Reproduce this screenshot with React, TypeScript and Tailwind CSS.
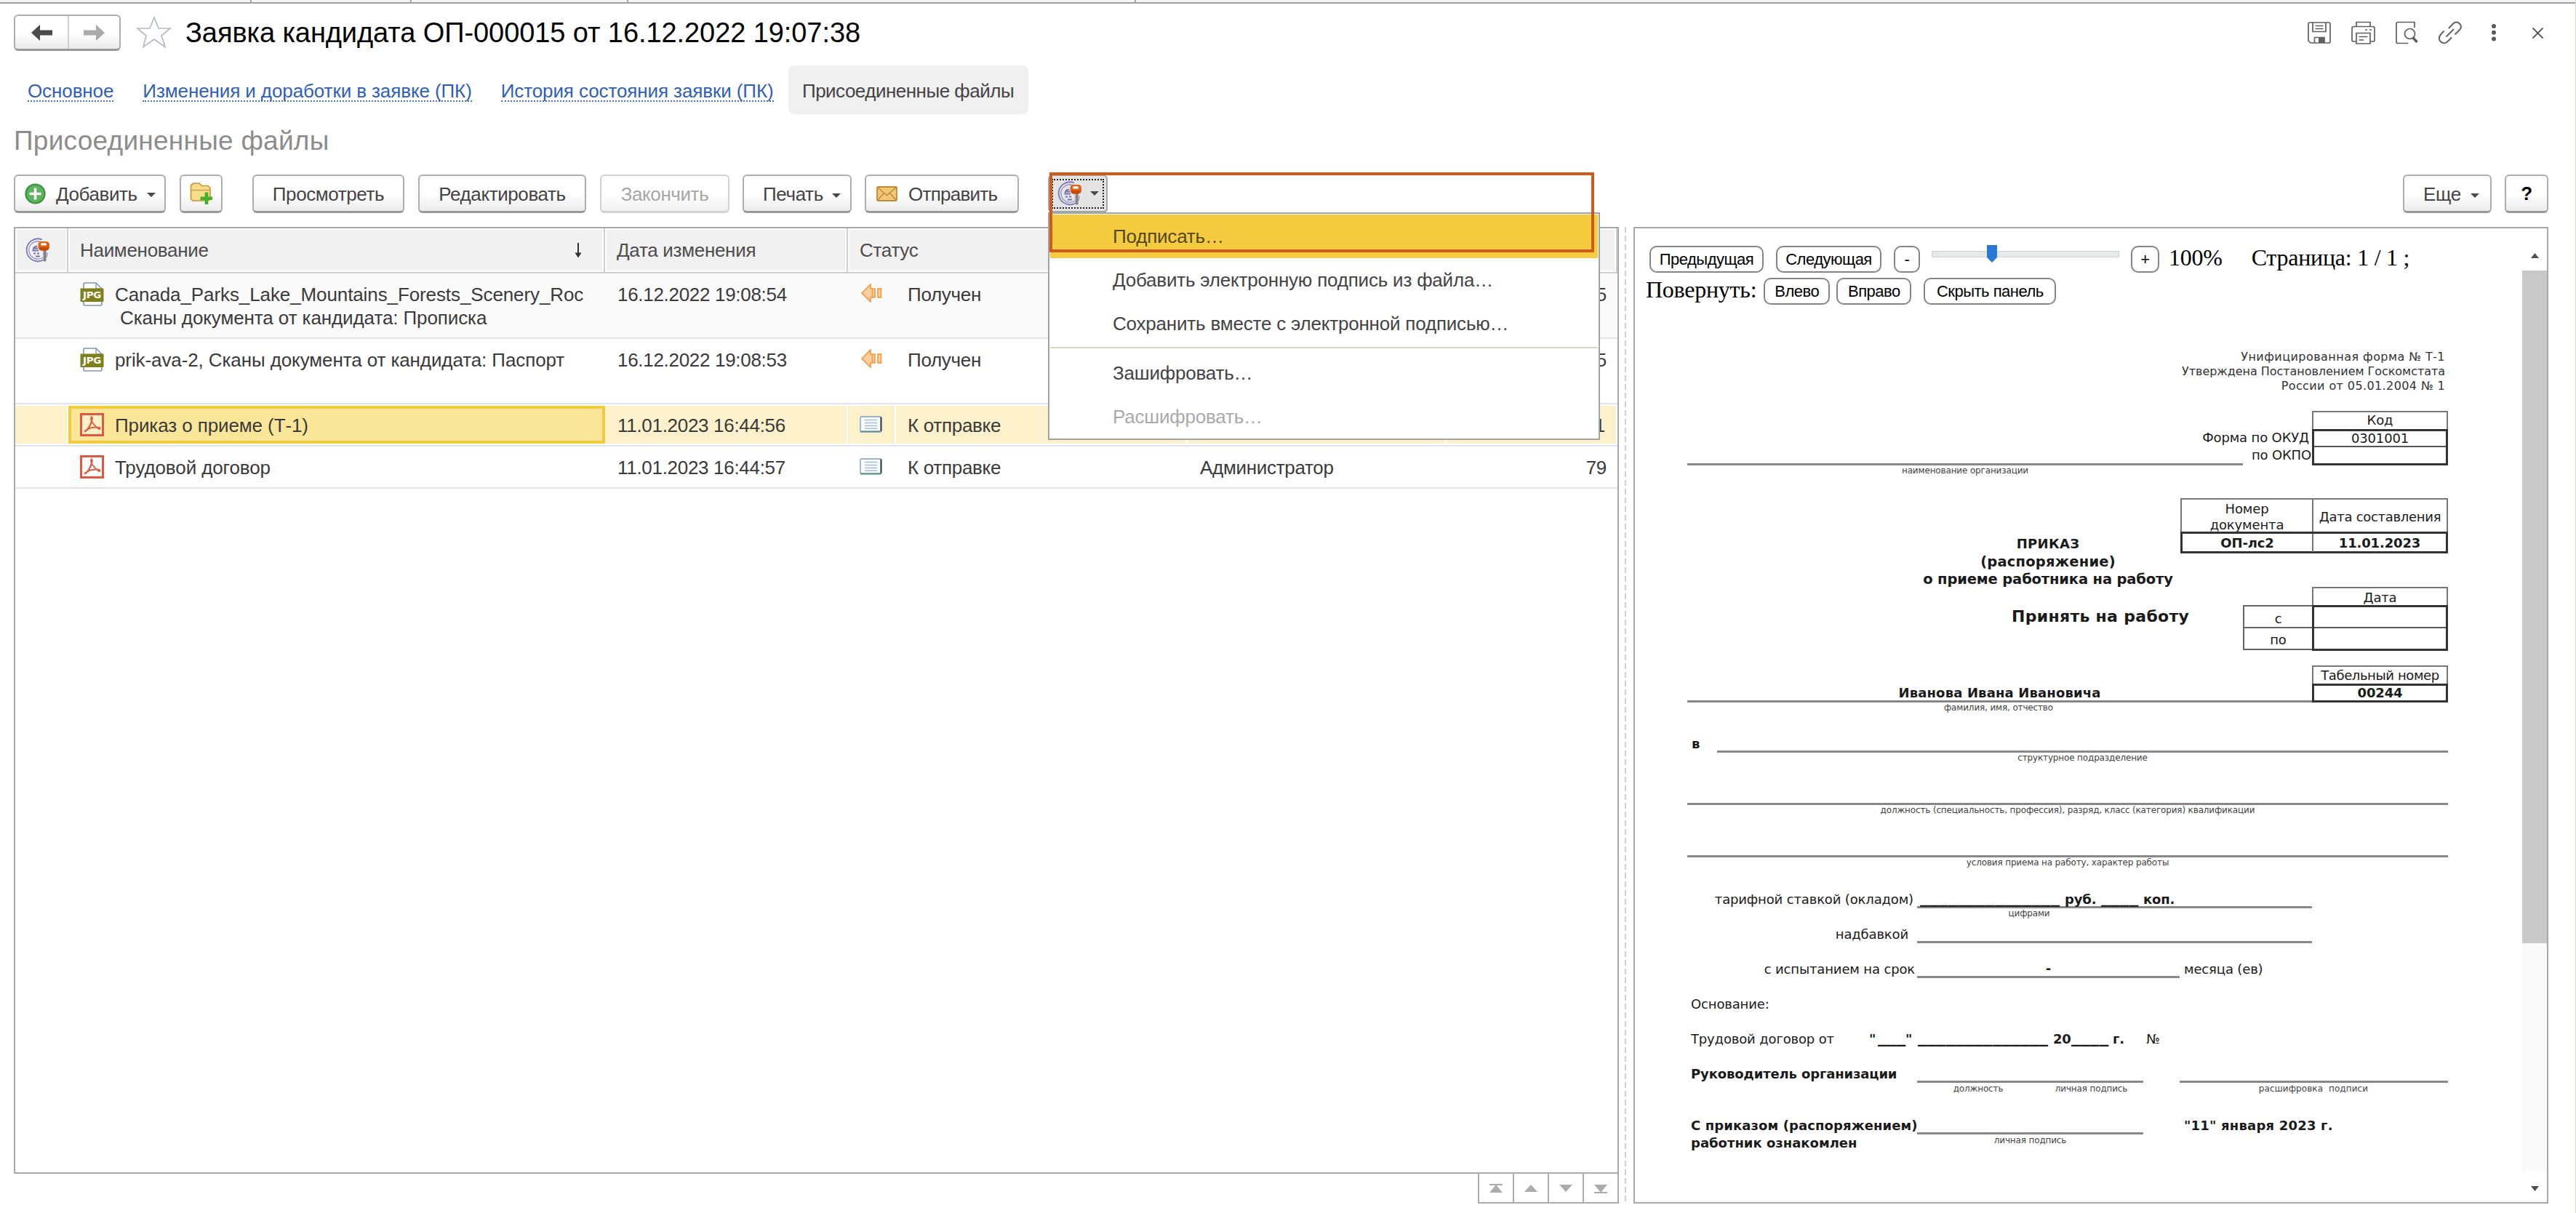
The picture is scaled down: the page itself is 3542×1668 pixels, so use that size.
import type { ReactNode } from "react";

const BTN =
  "flex h-[53px] shrink-0 items-center rounded-[6px] border-2 border-b-[3px] border-[#adadad] border-b-[#999999] bg-linear-to-b from-white from-50% to-[#ebebeb] whitespace-nowrap text-[#444444]";
const PLAIN_BTN =
  "flex h-[37px] shrink-0 items-center justify-center rounded-[10px] border-2 border-[#858585] bg-white font-['Liberation_Sans',sans-serif] text-[22px] leading-none tracking-[-0.5px] whitespace-nowrap text-black";
const COLS = "grid grid-cols-[73px_738px_334px_66px_401px_356px_235px]";
const CAPTION = "h-[14px] text-[12px] leading-[14px] tracking-[-0.15px] whitespace-nowrap text-[#444444]";
const RULE = "border-b-[3px] border-[#888888]";
const BLANK = "text-[25.6px] leading-[10px] tracking-normal";

type FileRow = {
  name: string;
  extra?: string;
  kind: "jpg" | "pdf";
  date: string;
  received: boolean;
  status: string;
  author: string;
  size: string;
  selected?: boolean;
};

const FILES: FileRow[] = [
  {
    name: "Canada_Parks_Lake_Mountains_Forests_Scenery_Roc",
    extra: "Сканы документа от кандидата: Прописка",
    kind: "jpg",
    date: "16.12.2022 19:08:54",
    received: true,
    status: "Получен",
    author: "",
    size: "5",
  },
  {
    name: "prik-ava-2, Сканы документа от кандидата: Паспорт",
    kind: "jpg",
    date: "16.12.2022 19:08:53",
    received: true,
    status: "Получен",
    author: "",
    size: "5",
  },
  {
    name: "Приказ о приеме (Т-1)",
    kind: "pdf",
    date: "11.01.2023 16:44:56",
    received: false,
    status: "К отправке",
    author: "",
    size: "1",
    selected: true,
  },
  {
    name: "Трудовой договор",
    kind: "pdf",
    date: "11.01.2023 16:44:57",
    received: false,
    status: "К отправке",
    author: "Администратор",
    size: "79",
  },
];

function Caret() {
  return (
    <svg className="h-[6px] w-[12px] shrink-0" viewBox="0 0 12 6">
      <path d="M0 0H12L6 6Z" fill="#4a4a4a" />
    </svg>
  );
}

function SignIcon() {
  return (
    <svg className="h-[34px] w-[34px] shrink-0" viewBox="0 0 34 34" fill="none">
      <path d="M23 2.500A15.500 15.500 0 1 0 25 30.200" stroke="#7d7bb8" strokeWidth="1.800" />
      <path d="M21 5.500A12.200 12.200 0 1 0 24 27" stroke="#9694c8" strokeWidth="1.300" />
      <path d="M30 20A15 15 0 0 1 28.500 27" stroke="#9694c8" strokeWidth="1.300" />
      <path d="M16 11.500C12 12 10.500 14 10.500 17.500H18M12 14.500H17M11 21.500H14M16 21.500H19M14 25.500H20" stroke="#7573b4" strokeWidth="1.800" />
      <path d="M24.200 14H28.500V31.500L26.500 33L24.200 30.500Z" fill="#808080" />
      <path d="M24.500 15V30" stroke="#b8b8b8" strokeWidth="1.500" />
      <rect x="17.500" y="5" width="15.500" height="12.500" rx="4.500" fill="#dd6218" />
      <path d="M19 13H32Q31 17 28 17.400H22Q19.500 17 19 13Z" fill="#c34a08" />
      <rect x="21" y="7.200" width="8" height="3.400" rx="1.500" fill="#fff" />
    </svg>
  );
}

function JpgIcon() {
  return (
    <svg className="h-[33px] w-[33px] shrink-0" viewBox="0 0 33 33">
      <path d="M5 9V2.500Q5 1 6.500 1H22L30 9V30Q30 32 28 32H7Q5 32 5 30Z" fill="#fff" stroke="#7d98ae" strokeWidth="1.600" />
      <path d="M22 1V9H30" fill="none" stroke="#7d98ae" strokeWidth="1.300" />
      <rect x="0.500" y="8.500" width="32" height="18.500" rx="1" fill="#80801a" />
      <text x="16.500" y="22.300" textAnchor="middle" fontFamily="'DejaVu Sans'" fontWeight="700" fontSize="12.500" textLength="25" lengthAdjust="spacingAndGlyphs" fill="#fff">
        JPG
      </text>
    </svg>
  );
}

function PdfIcon() {
  return (
    <svg className="h-[32px] w-[33px] shrink-0" viewBox="0 0 33 32" fill="none" stroke="#dd5a40">
      <rect x="1.500" y="1.500" width="30" height="29" fill="#fff" fillOpacity="0.450" strokeWidth="3" />
      <path d="M15 5.500C16.500 5 17 6.500 16.500 9C15.500 15 11 23.500 6.500 25.500" strokeWidth="2.200" />
      <path d="M15 6C14.500 10.500 19 18 27.500 22.500M6 25.500C11 20.500 20 18 28 20.500" strokeWidth="1.800" />
      <path d="M24 20.500L28 21.500" strokeWidth="3" />
    </svg>
  );
}

function ReceivedIcon() {
  return (
    <svg className="mt-px ml-[2px] h-[26px] w-[29px]" viewBox="0 0 29 26" fill="#fbcfa0" stroke="#f39a45" strokeWidth="1.700">
      <path d="M1 13L13 1V7H19V19H13V25Z" />
      <path d="M15.500 7V19" />
      <rect x="23" y="7" width="4.500" height="12" />
    </svg>
  );
}

function ToSendIcon() {
  return (
    <svg className="mt-[3px] h-[23px] w-[31px]" viewBox="0 0 31 23">
      <rect x="1" y="1" width="28.500" height="20.500" rx="1.500" fill="#f7fbfd" stroke="#9db4c8" strokeWidth="1.800" />
      <path d="M29.500 1.500V21" stroke="#3d4a52" strokeWidth="2.200" />
      <path d="M1 21.500H29.500" stroke="#5f8f8f" strokeWidth="2" />
      <path d="M7 5.500H24M7 9.500H24M7 13.500H24M7 17.300H24" stroke="#a9bfd0" strokeWidth="1.500" />
    </svg>
  );
}

function WindowIcons() {
  const cell = "flex w-[60px] items-center justify-center";
  return (
    <div className="flex h-[50px] pr-[22px]">
      <div className={cell}>
        <svg className="h-[30px] w-[32px]" viewBox="0 0 32 30" fill="none" stroke="#606060" strokeWidth="1.700">
          <path d="M3 1H29Q31 1 31 3V27Q31 29 29 29H4L1 26V3Q1 1 3 1Z" />
          <path d="M7 1V13.500H25V1M10.500 5.500H21.500M10.500 9.500H21.500M9.500 29V21.500H23V29" />
          <rect x="15" y="22" width="8" height="7" fill="#606060" stroke="none" />
        </svg>
      </div>
      <div className={cell}>
        <svg className="h-[32px] w-[33px]" viewBox="0 0 33 32" fill="none" stroke="#606060" strokeWidth="1.700">
          <path d="M7 7.500V1.500H26V7.500M7 28H3Q1 28 1 26V10Q1 7.500 3.500 7.500H29.500Q32 7.500 32 10V26Q32 28 30 28H26" />
          <path d="M7 16.500H26V31H7ZM10.500 21.500H22.500M10.500 26H17M19 12H22M25 12H28" />
        </svg>
      </div>
      <div className={cell}>
        <svg className="h-[32px] w-[31px]" viewBox="0 0 31 32" fill="none" stroke="#606060" strokeWidth="1.700">
          <path d="M17 30.500H3Q1 30.500 1 28.500V3.500Q1 1.500 3 1.500H26V9" />
          <circle cx="19.500" cy="17.500" r="7" />
          <path d="M24 23L29.500 29" strokeWidth="3.600" />
        </svg>
      </div>
      <div className={cell}>
        <svg className="h-[32px] w-[32px]" viewBox="0 0 32 32" fill="none" stroke="#606060" strokeWidth="1.900">
          <path d="M14 10L20 3.500Q24.500-.5 29 3.500Q33 8 29 12L22.500 18.500M7.500 13.500L3 18.500Q-1 23 2.500 28Q7.500 32.500 12 28.500L18 22.500M10.500 21.500L21 11" />
        </svg>
      </div>
      <div className={cell}>
        <svg className="h-[24px] w-[8px]" viewBox="0 0 8 24" fill="#5a5a5a">
          <circle cx="4" cy="3" r="3" />
          <circle cx="4" cy="11.700" r="3" />
          <circle cx="4" cy="20.500" r="3" />
        </svg>
      </div>
      <div className={cell}>
        <svg className="h-[15px] w-[15px]" viewBox="0 0 15 15" stroke="#505050" strokeWidth="1.900">
          <path d="M0.500 0.500L14.500 14.500M14.500 0.500L0.500 14.500" />
        </svg>
      </div>
    </div>
  );
}

function Header() {
  return (
    <div className="flex h-[85px] shrink-0 items-start pt-[15px] pl-[19px]">
      <div className="flex h-[50px] w-[147px] rounded-[6px] border-2 border-b-[3px] border-[#adadad] border-b-[#999999] bg-linear-to-b from-white from-50% to-[#ebebeb]">
        <div className="flex w-[74px] items-center justify-center border-r-2 border-[#cfcfcf]">
          <svg className="h-[22px] w-[29px]" viewBox="0 0 29 22">
            <path d="M0 11L12 0V7.500H29V14.500H12V22Z" fill="#4a4a4a" />
          </svg>
        </div>
        <div className="flex flex-1 items-center justify-center">
          <svg className="h-[22px] w-[29px]" viewBox="0 0 29 22">
            <path d="M29 11L17 0V7.500H0V14.500H17V22Z" fill="#aaaaaa" />
          </svg>
        </div>
      </div>
      <svg className="mt-[2px] ml-[21px] h-[45px] w-[50px]" viewBox="0 0 50 45" fill="none" stroke="#b3bbc4" strokeWidth="1.700">
        <path d="M25 2L31 17H47L35 27L40 42.500L25 32L10 42.500L14 27L2 17H19Z" />
      </svg>
      <h1 className="ml-[18px] flex-1 text-[38px] leading-[51px] tracking-[-0.08px] whitespace-nowrap text-black">
        Заявка кандидата ОП-000015 от 16.12.2022 19:07:38
      </h1>
      <WindowIcons />
    </div>
  );
}

function TabLinks() {
  const link =
    "mt-[2px] h-[30px] leading-[30px] tracking-[-0.1px] text-[#2f5fb8] border-b-2 border-dotted border-[#4a73c0] whitespace-nowrap";
  return (
    <div className="flex h-[67px] shrink-0 items-center pl-[38px]">
      <a className={link}>Основное</a>
      <a className={`${link} ml-[40px]`}>Изменения и доработки в заявке (ПК)</a>
      <a className={`${link} ml-[40px]`}>История состояния заявки (ПК)</a>
      <div className="ml-[20px] flex h-[67px] w-[330px] items-center justify-center rounded-[8px] bg-[#f0f0f0] pt-[2px] tracking-[-0.5px] text-[#444444]">
        Присоединенные файлы
      </div>
    </div>
  );
}

function MenuItem({ children, className = "text-[#444444]" }: { children: ReactNode; className?: string }) {
  return <div className={`h-[60px] pl-[86px] leading-[61px] tracking-[-0.2px] ${className}`}>{children}</div>;
}

function SignMenu() {
  return (
    <div className="relative ml-[40px] shrink-0">
      <div className="flex h-[53px] w-[82px] items-center rounded-[6px] border-2 border-b-[3px] border-[#a5a5a5] bg-[#e4e4e4] px-[3px]">
        <div className="flex h-[41px] w-[72px] items-center border-2 border-dotted border-[#222222] pl-[6px]">
          <SignIcon />
          <span className="ml-[11px]">
            <Caret />
          </span>
        </div>
      </div>
      <div className="absolute top-[52px] left-0 z-10 h-[313px] w-[759px] border-2 border-[#a0a3a8] bg-white px-px pt-px whitespace-nowrap">
        <MenuItem className="bg-[#f5cb3f] text-[#54491f]">Подписать…</MenuItem>
        <MenuItem>Добавить электронную подпись из файла…</MenuItem>
        <MenuItem>Сохранить вместе с электронной подписью…</MenuItem>
        <div className="mt-[2px] mb-[4px] h-[2px] bg-[#dcd6c4]" />
        <MenuItem>Зашифровать…</MenuItem>
        <MenuItem className="text-[#aaaaaa]">Расшифровать…</MenuItem>
      </div>
      <div className="absolute -top-[3px] left-[2px] z-20 h-[110px] w-[749px] border-4 border-[#cf5b1b]" />
    </div>
  );
}

function Toolbar() {
  return (
    <div className="flex h-[72px] shrink-0 items-start pr-[37px] pl-[19px] tracking-[-0.4px]">
      <div className={`${BTN} w-[209px] pl-[13px]`}>
        <svg className="h-[29px] w-[29px] shrink-0" viewBox="0 0 29 29">
          <circle cx="14.500" cy="14.500" r="13" fill="#5bb45b" stroke="#3b8f3f" strokeWidth="2.200" />
          <path d="M14.500 6.500V22.500M6.500 14.500H22.500" stroke="#fff" strokeWidth="3.600" />
        </svg>
        <span className="ml-[14px] pt-px">Добавить</span>
        <span className="ml-[13px] flex pt-[4px]">
          <Caret />
        </span>
      </div>
      <div className={`${BTN} ml-[19px] w-[59px] justify-center`}>
        <svg className="h-[30px] w-[31px]" viewBox="0 0 31 30">
          <path d="M1.500 4L5 1H13L16.500 4.500H25L28 7.500V22L25.500 25H4L1.500 22.500Z" fill="#f6dd8a" stroke="#c9963a" strokeWidth="1.700" />
          <path d="M2 10.500H28" stroke="#d2a24a" strokeWidth="1.500" />
          <path d="M23 13.500V30M14.500 21.800H31" stroke="#43b02a" strokeWidth="4.600" />
        </svg>
      </div>
      <div className={`${BTN} ml-[41px] w-[209px] justify-center pt-px`}>Просмотреть</div>
      <div className={`${BTN} ml-[19px] w-[231px] justify-center pt-px`}>Редактировать</div>
      <div className="ml-[19px] flex h-[53px] w-[178px] shrink-0 items-center justify-center rounded-[6px] border-2 border-b-[3px] border-[#d2d2d2] bg-linear-to-b from-white from-50% to-[#f0f0f0] pt-px text-[#a6a6a6]">
        Закончить
      </div>
      <div className={`${BTN} ml-[18px] w-[150px] pt-px pl-[26px]`}>
        Печать
        <span className="ml-[12px] flex pt-[4px]">
          <Caret />
        </span>
      </div>
      <div className={`${BTN} ml-[18px] w-[212px] pl-[14px]`}>
        <svg className="h-[21px] w-[29px] shrink-0" viewBox="0 0 29 21" stroke="#c08a35" strokeWidth="1.800">
          <rect x="1" y="1" width="27" height="19" rx="1.500" fill="#f0c878" />
          <path d="M2 2L14.500 12.500L27 2M2 19L10.500 9.500M27 19L18.500 9.500" fill="none" strokeWidth="1.400" />
        </svg>
        <span className="ml-[15px] pt-px tracking-[-0.75px]">Отправить</span>
      </div>
      <SignMenu />
      <div className={`${BTN} ml-auto w-[122px] pt-px pl-[26px]`}>
        Еще
        <span className="ml-[13px] flex pt-[4px]">
          <Caret />
        </span>
      </div>
      <div className={`${BTN} ml-[18px] w-[60px] justify-center font-bold`}>
        <span className="text-black">?</span>
      </div>
    </div>
  );
}

function HeadCell({ children, className = "" }: { children?: ReactNode; className?: string }) {
  return (
    <div className={`border-r-2 border-[#cfcfcf] p-[2px] ${className}`}>
      <div className="flex h-full items-center bg-[#f1f1f1] pl-[12px]">{children}</div>
    </div>
  );
}

function TableRow({ file, index }: { file: FileRow; index: number }) {
  const tall = file.kind === "jpg";
  const cell = file.selected ? "mt-[2px] h-[52px] border-r-2 border-white bg-[#fdf1cb] pt-[11px]" : "pt-[13px]";
  return (
    <div
      className={`${COLS} border-b-2 border-[#e2e4e6] leading-[32px] ${tall ? "h-[90px]" : "h-[58px]"} ${
        index === 0 ? "bg-[#fafafa]" : "bg-white"
      }`}
    >
      <div className={cell} />
      <div
        className={
          file.selected
            ? "mt-[2px] flex h-[52px] border-4 border-[#f3ca3e] bg-[#fae698] pt-[6px] pl-[12px]"
            : "flex pt-[12px] pl-[16px]"
        }
      >
        {file.kind === "jpg" ? <JpgIcon /> : <PdfIcon />}
        <div className="ml-[15px] pt-px tracking-[-0.1px] whitespace-nowrap">
          {file.name}
          {file.extra && <div className="pl-[7px]">{file.extra}</div>}
        </div>
      </div>
      <div className={`${cell} pl-[17px]`}>{file.date}</div>
      <div className={`${cell} pl-[16px]`}>{file.received ? <ReceivedIcon /> : <ToSendIcon />}</div>
      <div className={`${cell} pl-[16px]`}>{file.status}</div>
      <div className={`${cell} pl-[17px]`}>{file.author}</div>
      <div className={`${cell} pr-[15px] text-right ${file.selected ? "border-r-0" : ""}`}>{file.size}</div>
    </div>
  );
}

function FileTable() {
  const pager = "flex w-[50px] -ml-[2px] items-center justify-center border-2 border-[#acacac]";
  return (
    <div className="flex w-[2207px] shrink-0 flex-col">
      <div className="h-[1302px] shrink-0 border-2 border-[#a8a8a8] tracking-[-0.3px] text-[#3a3a3a]">
        <div className="grid h-[62px] grid-cols-[73px_738px_334px_467px_356px_235px] border-b-2 border-[#cfcfcf] text-[#4d4d4d]">
          <HeadCell>
            <SignIcon />
          </HeadCell>
          <HeadCell>
            <span className="flex-1 pl-[2px]">Наименование</span>
            <svg className="mr-[28px] h-[21px] w-[10px]" viewBox="0 0 10 21">
              <path d="M5 0V17" stroke="#333" strokeWidth="2" />
              <path d="M0.500 13.500H9.500L5 20.500Z" fill="#333" />
            </svg>
          </HeadCell>
          <HeadCell>
            <span className="pl-[2px]">Дата изменения</span>
          </HeadCell>
          <HeadCell>
            <span className="pl-[2px]">Статус</span>
          </HeadCell>
          <HeadCell />
          <HeadCell className="border-r-0" />
        </div>
        {FILES.map((file, i) => (
          <TableRow key={file.name} file={file} index={i} />
        ))}
      </div>
      <div className="-mt-[2px] flex h-[43px] shrink-0 justify-end">
        <div className={pager}>
          <svg className="h-[12px] w-[18px]" viewBox="0 0 18 12" fill="#acacac">
            <path d="M0 0H18V2H0ZM9 1L18 12H0Z" />
          </svg>
        </div>
        <div className={pager}>
          <svg className="h-[10px] w-[18px]" viewBox="0 0 18 10" fill="#acacac">
            <path d="M9 0L18 10H0Z" />
          </svg>
        </div>
        <div className={pager}>
          <svg className="h-[10px] w-[18px]" viewBox="0 0 18 10" fill="#acacac">
            <path d="M0 0H18L9 10Z" />
          </svg>
        </div>
        <div className={pager}>
          <svg className="mt-[2px] h-[12px] w-[18px]" viewBox="0 0 18 12" fill="#acacac">
            <path d="M0 0H18L9 11ZM0 10H18V12H0Z" />
          </svg>
        </div>
      </div>
    </div>
  );
}

function ViewerToolbar() {
  return (
    <div className="shrink-0 pt-[24px] font-['Liberation_Serif',serif] text-[32px] tracking-[-0.25px] text-black">
      <div className="flex h-[37px] items-center pl-[20px]">
        <div className={`${PLAIN_BTN} w-[157px]`}>Предыдущая</div>
        <div className={`${PLAIN_BTN} ml-[17px] w-[145px]`}>Следующая</div>
        <div className={`${PLAIN_BTN} ml-[17px] w-[36px]`}>-</div>
        <svg className="mb-[16px] ml-[16px] h-[26px] w-[258px]" viewBox="0 0 258 26">
          <rect x="0.500" y="9.500" width="257" height="8" fill="#e6e9e8" stroke="#cfd2d1" />
          <path d="M76 1H90V18L83 25L76 18Z" fill="#2a78d6" />
        </svg>
        <div className={`${PLAIN_BTN} ml-[16px] w-[39px]`}>+</div>
        <span className="ml-[13px] pb-[5px]">100%</span>
        <span className="ml-[40px] pb-[5px]">Страница: 1 / 1 ;</span>
      </div>
      <div className="mt-[7px] flex h-[37px] items-center pl-[15px]">
        <span className="pb-[5px]">Повернуть:</span>
        <div className={`${PLAIN_BTN} ml-[10px] w-[91px]`}>Влево</div>
        <div className={`${PLAIN_BTN} ml-[9px] w-[103px]`}>Вправо</div>
        <div className={`${PLAIN_BTN} ml-[17px] w-[182px] tracking-[-0.1px]`}>Скрыть панель</div>
      </div>
    </div>
  );
}

// Printed order form T-1
function OrderForm() {
  return (
    <div className="ml-[72px] w-[1046px] font-['DejaVu_Sans',sans-serif] text-[18px] leading-[20px] tracking-[-0.15px] whitespace-nowrap text-[#1a1a1a]">
      <div className="mt-[62px] pr-[4px] text-right text-[16px] leading-[20px] text-[#333333]">
        <div className="tracking-[0.45px]">Унифицированная форма № Т-1</div>
        <div className="tracking-[-0.04px]">Утверждена Постановлением Госкомстата</div>
        <div className="tracking-[0.4px]">России от 05.01.2004 № 1</div>
      </div>

      <div className="mt-[24px] flex h-[75px] items-end">
        <div className="h-[3px] w-[764px] bg-[#888888]" />
        <div className="flex h-full w-[95px] flex-col items-end pt-[27px]">
          <div className="pr-[4px]">Форма по ОКУД</div>
          <div className="mt-[4px] pr-px">по ОКПО</div>
        </div>
        <div className="h-full w-[187px] text-center">
          <div className="h-[25px] border-2 border-b-0 border-[#777777] leading-[22px]">Код</div>
          <div className="h-[50px] border-[3px] border-[#333333]">
            <div className="h-[22px] border-b-2 border-[#555555] leading-[20px]">0301001</div>
          </div>
        </div>
      </div>
      <div className={`${CAPTION} w-[764px] text-center`}>наименование организации</div>

      <div className="mt-[31px] flex h-[209px]">
        <div className="w-[678px] pt-[51px] font-bold">
          <div className="ml-[315px] w-[362px] text-center text-[19.5px] leading-[24.500px]">
            <div className="text-[18px] tracking-[0.3px]">ПРИКАЗ</div>
            <div className="tracking-[0.2px]">(распоряжение)</div>
            <div>о приеме работника на работу</div>
          </div>
          <div className="mt-[24px] ml-[446px] text-[22px] leading-[28px] tracking-[0.3px]">Принять на работу</div>
        </div>
        <div className="flex w-[368px] flex-col items-end text-center">
          <div className="grid h-[46px] w-full shrink-0 grid-cols-[181px_183px] border-2 border-b-0 border-[#777777]">
            <div className="border-r-2 border-[#777777] pt-[2px] leading-[22px]">
              Номер
              <br />
              документа
            </div>
            <div className="leading-[48px] tracking-[-0.3px]">Дата составления</div>
          </div>
          <div className="grid h-[30px] w-full shrink-0 grid-cols-[180px_182px] border-[3px] border-[#333333] leading-[25px] font-bold">
            <div className="border-r-2 border-[#777777]">ОП-лс2</div>
            <div>11.01.2023</div>
          </div>
          <div className="mt-[46px] h-[25px] w-[187px] shrink-0 border-2 border-b-0 border-[#777777] leading-[26px]">Дата</div>
          <div className="flex">
            <div className="h-[62px] w-[95px] border-2 border-r-0 border-[#666666]">
              <div className="h-[30px] border-b-2 border-[#666666] leading-[34px]">с</div>
              <div className="leading-[32px]">по</div>
            </div>
            <div className="h-[63px] w-[187px] border-[3px] border-[#333333]">
              <div className="h-[29px] border-b-2 border-[#555555]" />
            </div>
          </div>
        </div>
      </div>

      <div className="mt-[21px] flex h-[51px] items-end text-center">
        <div className={`${RULE} h-[24px] w-[859px] leading-[22px] font-bold tracking-[0.15px]`}>Иванова Ивана Ивановича</div>
        <div className="w-[187px]">
          <div className="h-[25px] border-2 border-b-0 border-[#777777] leading-[23px] tracking-[-0.4px]">Табельный номер</div>
          <div className="h-[26px] border-[3px] border-[#333333] leading-[20px] font-bold">00244</div>
        </div>
      </div>
      <div className={`${CAPTION} w-[856px] text-center`}>фамилия, имя, отчество</div>

      <div className="mt-[33px] flex h-[22px] pl-[6px]">
        <div className="w-[35px] font-bold">в</div>
        <div className={`${RULE} flex-1`} />
      </div>
      <div className={`${CAPTION} pl-[41px] text-center`}>структурное подразделение</div>
      <div className={`${RULE} mt-[55px]`} />
      <div className={`${CAPTION} text-center`}>
        должность (специальность, профессия), разряд, класс (категория) квалификации
      </div>
      <div className={`${RULE} mt-[55px]`} />
      <div className={`${CAPTION} text-center`}>условия приема на работу, характер работы</div>

      <div className="mt-[34px] flex h-[22px]">
        <div className="w-[316px] pr-[5px] text-right">тарифной ставкой (окладом)</div>
        <div className={`${RULE} flex w-[543px] pl-[4px] font-bold`}>
          <span className={`${BLANK} w-[199px]`}>_______________</span>
          <span className="w-[50px]">руб.</span>
          <span className={`${BLANK} w-[58px]`}>____</span>
          <span>коп.</span>
        </div>
      </div>
      <div className={`${CAPTION} ml-[316px] w-[308px] text-center`}>цифрами</div>
      <div className="mt-[12px] flex h-[22px]">
        <div className="w-[316px] pr-[12px] text-right">надбавкой</div>
        <div className={`${RULE} w-[543px]`} />
      </div>
      <div className="mt-[26px] flex h-[22px]">
        <div className="w-[316px] pr-[3px] text-right">с испытанием на срок</div>
        <div className={`${RULE} w-[361px] text-center leading-[18px] font-bold`}>-</div>
        <div className="pl-[6px]">месяца (ев)</div>
      </div>
      <div className="mt-[26px] pl-[5px]">Основание:</div>
      <div className="mt-[28px] flex pl-[5px]">
        <div className="w-[245px]">Трудовой договор от</div>
        <div className="flex w-[381px] font-bold">
          <span className="w-[12px]">"</span>
          <span className={`${BLANK} w-[38px]`}>___</span>
          <span className="w-[17px]">"</span>
          <span className={`${BLANK} w-[186px]`}>______________</span>
          <span className="w-[25px]">20</span>
          <span className={`${BLANK} w-[57px]`}>____</span>
          <span>г.</span>
        </div>
        <div>№</div>
      </div>
      <div className="mt-[28px] flex h-[22px]">
        <div className="w-[316px] pl-[5px] font-bold">Руководитель организации</div>
        <div className={`${RULE} w-[311px]`} />
        <div className={`${RULE} ml-[50px] w-[369px]`} />
      </div>
      <div className={`${CAPTION} flex pt-px pl-[316px] text-center`}>
        <div className="w-[168px]">должность</div>
        <div className="w-[143px]">личная подпись</div>
        <div className="ml-[50px] w-[368px] tracking-[0.1px]">расшифровка&nbsp; подписи</div>
      </div>
      <div className="mt-[35px] flex h-[22px] font-bold">
        <div className="w-[316px] pl-[5px] tracking-[0.1px]">С приказом (распоряжением)</div>
        <div className={`${RULE} w-[311px]`} />
        <div className="pl-[56px] tracking-[0.2px]">"11" января 2023 г.</div>
      </div>
      <div className="flex">
        <div className="w-[316px] pt-[2px] pl-[5px] font-bold tracking-normal">работник ознакомлен</div>
        <div className={`${CAPTION} w-[311px] pt-px text-center`}>личная подпись</div>
      </div>
    </div>
  );
}

function Viewer() {
  return (
    <div className="flex h-[1343px] w-[1258px] border-2 border-[#a8a8a8]">
      <div className="flex min-w-0 flex-1 flex-col">
        <ViewerToolbar />
        <OrderForm />
      </div>
      <div className="flex w-[34px] shrink-0 flex-col items-center">
        <div className="flex h-[58px] items-center pt-[17px]">
          <svg className="h-[7px] w-[11px]" viewBox="0 0 11 7">
            <path d="M5.500 0L11 7H0Z" fill="#505050" />
          </svg>
        </div>
        <div className="h-[925px] w-full bg-[#c9c9c9]" />
        <div className="h-[314px] w-full bg-[#fafafa]" />
        <div className="flex h-[42px] items-center pt-[5px]">
          <svg className="h-[7px] w-[11px]" viewBox="0 0 11 7">
            <path d="M0 0H11L5.500 7Z" fill="#505050" />
          </svg>
        </div>
      </div>
    </div>
  );
}

export default function App() {
  return (
    <div className="flex h-[1668px] w-full flex-col overflow-hidden border-r border-[#d9d2c4] bg-white font-['Liberation_Sans',Arial,sans-serif] text-[26px] leading-[32px]">
      <div className="flex h-[5px] shrink-0 border-b-2 border-[#a0a0a0] bg-[#f4f4f4]">
        <div className="w-[346px] border-r-2 border-[#a0a0a0]" />
        <div className="w-[220px] border-r-2 border-[#a0a0a0]" />
        <div className="w-[298px] border-r-2 border-[#a0a0a0]" />
        <div className="w-[698px] border-r-2 border-[#a0a0a0]" />
      </div>
      <Header />
      <TabLinks />
      <h2 className="h-[83px] shrink-0 pt-[15px] pl-[19px] text-[37px] leading-[44px] tracking-[0.25px] text-[#8c8c8c]">
        Присоединенные файлы
      </h2>
      <Toolbar />
      <div className="flex h-[1343px] shrink-0 pl-[19px]">
        <FileTable />
        <div className="ml-[8px] h-full w-[2px] shrink-0 bg-[repeating-linear-gradient(to_bottom,#d2d2d2_0_8px,transparent_8px_12px)]" />
        <div className="ml-[10px]">
          <Viewer />
        </div>
      </div>
    </div>
  );
}
